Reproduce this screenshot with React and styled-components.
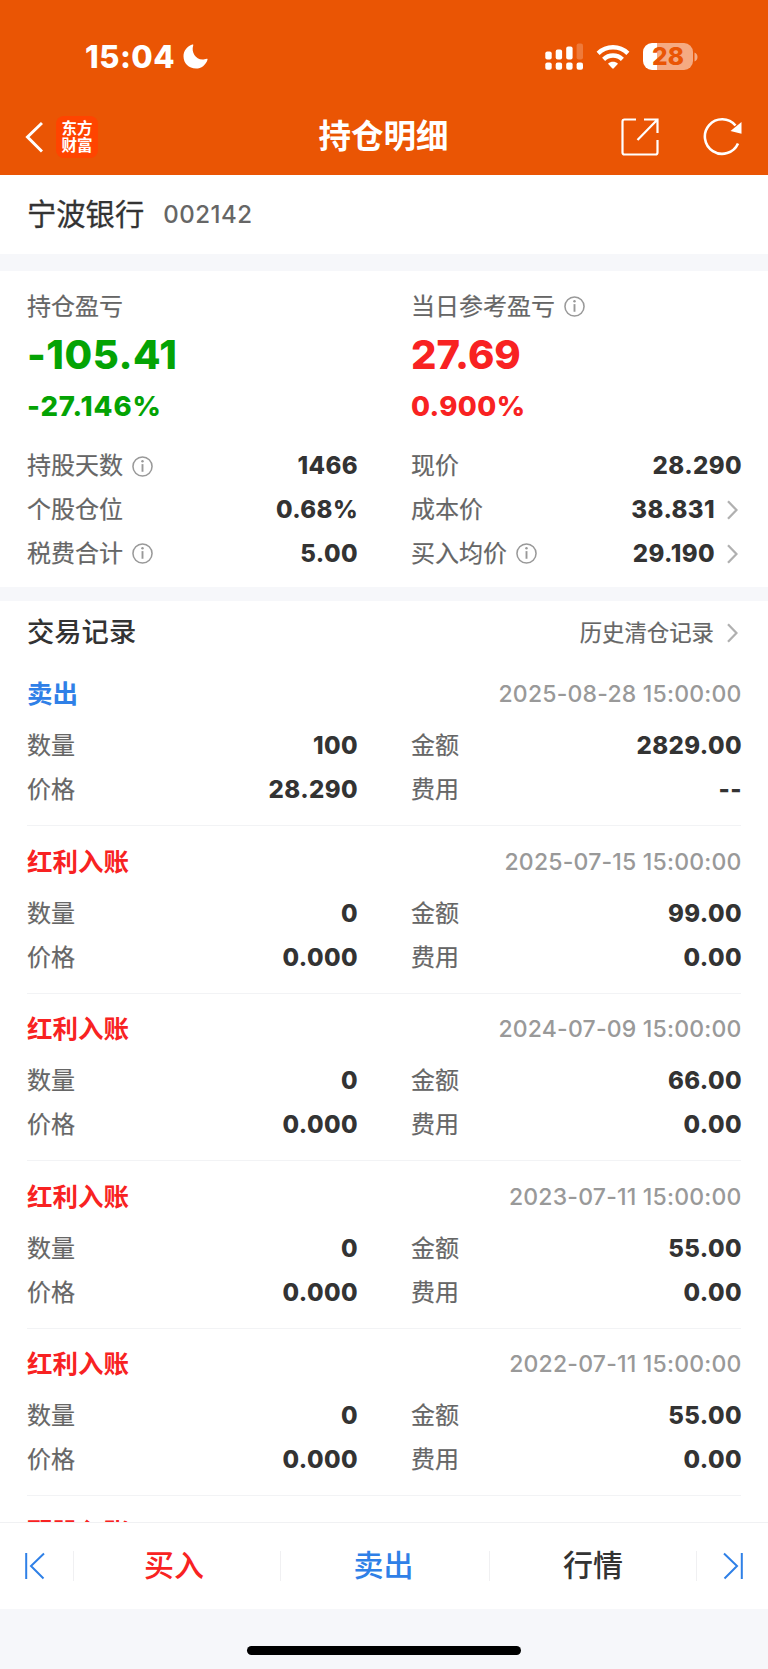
import React from 'react';
import styled, { createGlobalStyle } from 'styled-components';

const GlobalStyle = createGlobalStyle`
  * {
    box-sizing: border-box;
  }
  body {
    margin: 0;
    background: #fff;
    font-family: Inter, "Noto Sans CJK SC", sans-serif;
    color: #333;
  }
  svg {
    display: block;
    flex-shrink: 0;
  }
`

const colors = {
  red: '#f82222',
  green: '#04a304',
  blue: '#2f80e7',
}

const Page = styled.div`
  width: 768px;
  height: 1669px;
  overflow: hidden;
  display: flex;
  flex-direction: column;
  background: #fff;
`
const Header = styled.header`
  height: 175px;
  flex-shrink: 0;
  background: #ea5504;
  color: #fff;
`
const StatusBar = styled.div`
  height: 99px;
  padding: 14px 70px 0 85px;
  display: flex;
  align-items: center;
  justify-content: space-between;
`
const Clock = styled.div`
  display: flex;
  align-items: center;
  gap: 8px;
  font-size: 31px;
  line-height: 40px;
  font-weight: 800;
  letter-spacing: 0.5px;
`
const StatusIcons = styled.div`
  display: flex;
  align-items: center;
`
const Battery = styled.div`
  width: 50px;
  height: 27px;
  margin-left: 13px;
  border-radius: 9px;
  background: linear-gradient(to right, #fff 14px, #f5aa82 14px);
  color: #ea5504;
  font-size: 24.5px;
  font-weight: 800;
  line-height: 27px;
  text-align: center;
`
const NavBar = styled.nav`
  height: 75px;
  padding: 0 26px 0 25px;
  display: grid;
  grid-template-columns: 1fr auto 1fr;
  align-items: center;
`
const NavLeft = styled.div`
  display: flex;
  align-items: center;
  gap: 13px;
`
const NavRight = styled.div`
  display: flex;
  align-items: center;
  justify-content: flex-end;
  gap: 44px;
`
const Logo = styled.div`
  width: 42px;
  height: 42px;
  padding-top: 4px;
  border-radius: 8px;
  background: #ff4400;
  font-size: 15.5px;
  line-height: 17px;
  font-weight: 700;
  text-align: center;
`
const Title = styled.h1`
  margin: 0;
  font-size: 32.5px;
  line-height: 40px;
  font-weight: 700;
`
const StockBar = styled.div`
  height: 79px;
  flex-shrink: 0;
  padding: 0 27px;
  display: flex;
  align-items: center;
  gap: 19px;
`
const StockName = styled.span`
  font-size: 29.3px;
  line-height: 40px;
  -webkit-text-stroke: 0.3px currentColor;
`
const StockCode = styled.span`
  font-size: 24px;
  font-weight: 500;
  color: #666;
  letter-spacing: 0.5px;
`
const Gap = styled.div`
  height: ${props => props.$height}px;
  flex-shrink: 0;
  background: #f6f7fa;
`
const Summary = styled.section`
  height: 316px;
  flex-shrink: 0;
  padding: 17.5px 27px 0;
`
const Columns = styled.div`
  display: grid;
  grid-template-columns: 330px 330px;
  column-gap: 54px;
`
const Profit = styled.div`
  height: 156px;
  color: ${props => props.$color};
  font-weight: 800;
  font-feature-settings: "calt" 0;
`
const Amount = styled.div`
  margin-top: 7.5px;
  font-size: 40px;
  line-height: 46px;
  letter-spacing: ${props => props.$spacing || 0}px;
`
const Percent = styled.div`
  margin-top: 9.5px;
  font-size: 27.5px;
  line-height: 36px;
  letter-spacing: ${props => props.$spacing || 0}px;
`
const Row = styled.div`
  height: 43.7px;
  display: flex;
  align-items: center;
`
const Label = styled.span`
  display: flex;
  align-items: center;
  gap: 8.5px;
  font-size: 24px;
  line-height: 36px;
  font-weight: 400;
  color: #666;
  -webkit-text-stroke: 0.2px currentColor;
`
const Value = styled.span`
  margin-left: auto;
  margin-right: -1px;
  font-size: 24px;
  line-height: 36px;
  font-weight: 800;
  letter-spacing: 0.4px;
`
const ArrowBox = styled.span`
  width: 27px;
  padding-left: 12.5px;
`
const Records = styled.section`
  flex: 1;
  min-height: 0;
  overflow: hidden;
  padding: 0 27px;
`
const RecordsHead = styled.div`
  height: 64px;
  display: flex;
  align-items: center;
  justify-content: space-between;
`
const RecordsTitle = styled.h2`
  margin: 0;
  font-size: 27.3px;
  line-height: 40px;
  font-weight: 500;
`
const HistoryLink = styled.span`
  height: 34px;
  display: flex;
  align-items: center;
  font-size: 22.4px;
  line-height: 30px;
  padding-bottom: 1px;
  color: #666;
  -webkit-text-stroke: 0.2px currentColor;
`
const Record = styled.article`
  height: 167.5px;
  padding-top: 6px;
  border-bottom: 1px solid #f2f3f5;
  & + & {
    padding-top: 12.5px;
  }
  &:nth-of-type(1) {
    height: 161px;
  }
`
const RecordHead = styled.div`
  height: 46px;
  margin-bottom: 7.6px;
  display: flex;
  align-items: center;
  justify-content: space-between;
`
const RecordType = styled.span`
  font-size: 25.5px;
  line-height: 38px;
  font-weight: 700;
  color: ${props => props.$color};
`
const RecordDate = styled.time`
  margin-right: -0.5px;
  font-size: 23px;
  font-weight: 500;
  color: #999;
  letter-spacing: 0.2px;
`
const Footer = styled.footer`
  height: 87px;
  flex-shrink: 0;
  border-top: 1px solid #f0f1f3;
  display: grid;
  grid-template-columns: 73px 207px 209px 207px 72px;
  align-items: center;
`
const Tab = styled.div`
  height: 30px;
  padding-right: ${props => props.$shift || 0}px;
  display: flex;
  align-items: center;
  justify-content: center;
  border-left: 1px solid ${props => (props.$edge ? 'transparent' : '#f0f0f2')};
  font-size: 30px;
  line-height: 30px;
  font-weight: 500;
  color: ${props => props.$color};
  span {
    margin-bottom: 3px;
  }
`
const HomeArea = styled.div`
  height: 60px;
  flex-shrink: 0;
  padding-top: 37px;
  background: #f6f7fa;
`
const HomeBar = styled.div`
  width: 274px;
  height: 9px;
  margin: 0 auto;
  border-radius: 5px;
  background: #000;
`

const MoonIcon = () => (
  <svg width="25" height="25" viewBox="0 0 25 25" fill="#fff">
    <path d="M9.300.6C10 .3 10.500 .7 10.200 1.400 7.800 8.500 13.500 17 21.500 15.300c.9-.1 1.600-.3 2.300-.5.6-.1.9.3.7.9C22.800 21 18.400 24.500 13 24.500 5.800 24.500.5 19.200.5 12.200.5 7 4.200 2.200 9.300.6Z" />
  </svg>
)

const SignalIcon = () => (
  <svg width="39" height="28" viewBox="0 0 39 28" fill="#fff">
    <rect x="0.300" y="8.500" width="6.400" height="8" rx="2" />
    <rect x="10.700" y="6.500" width="6.400" height="10" rx="2" />
    <rect x="21.200" y="3.500" width="6.400" height="13" rx="2" />
    <rect x="31.600" y="0.500" width="6.400" height="16" rx="2" opacity=".22" />
    <rect x="0.300" y="19.600" width="6.400" height="7.200" rx="2" />
    <rect x="10.700" y="19.600" width="6.400" height="7.200" rx="2" />
    <rect x="21.200" y="19.600" width="6.400" height="7.200" rx="2" />
    <rect x="31.600" y="19.600" width="6.400" height="7.200" rx="2" />
  </svg>
)

const WifiSvg = styled.svg`
  margin-left: 12px;
`
const WifiIcon = () => (
  <WifiSvg width="34" height="26" viewBox="0 0 34 26" fill="none" stroke="#fff" strokeWidth="4.400">
    <path d="M2.100 9.300C10.500 1.200 23.500 1.200 31.900 9.300" />
    <path d="M7.600 15.300C13 10.200 21 10.200 26.400 15.300" />
    <path d="M12 19.700C15 17.100 19 17.100 22 19.700L17.800 24.300Q17 25.100 16.200 24.300Z" fill="#fff" stroke="none" />
  </WifiSvg>
)

const BatteryCap = () => (
  <svg width="5" height="10" viewBox="0 0 5 10" fill="#f5aa82">
    <path d="M1.500 .5C5.500 2 5.500 8 1.500 9.500Z" />
  </svg>
)

const BackIcon = () => (
  <svg width="18" height="32" viewBox="0 0 18 32" fill="none" stroke="#fff" strokeWidth="3">
    <path d="M17 2 2.500 16 17 30.500" />
  </svg>
)

const ShareIcon = () => (
  <svg width="38" height="38" viewBox="0 0 38 38" fill="none" stroke="#fff" strokeWidth="2.200">
    <path d="M15 1.500H3.500Q1.500 1.500 1.500 3.500V34.500Q1.500 36.500 3.500 36.500H34.500Q36.500 36.500 36.500 34.500V22" />
    <path d="M23 1.500H36.500V15M36.500 1.500 16.500 22" />
  </svg>
)

const RefreshIcon = () => (
  <svg width="39" height="39" viewBox="0 0 39 39" fill="none" stroke="#fff" strokeWidth="2.600">
    <path d="M35 26.500A17.300 17.300 0 1 1 32.500 8.500" />
    <path d="M27.500 14 38.500 5V16.800Z" fill="#fff" stroke="none" />
  </svg>
)

const InfoIcon = () => (
  <svg width="21" height="21" viewBox="0 0 22 22" fill="none" stroke="#999" strokeWidth="1.600">
    <circle cx="11" cy="11" r="10" />
    <path d="M11 8.500V16.500" strokeWidth="2" />
    <circle cx="11" cy="5.600" r="1.300" fill="#999" stroke="none" />
  </svg>
)

const ArrowIcon = () => (
  <svg width="11" height="20" viewBox="0 0 11 20" fill="none" stroke="#b0b0b0" strokeWidth="2.300">
    <path d="M1 1.200 9.500 10 1 18.800" />
  </svg>
)

const EdgeIcon = ({ flip }) => (
  <svg width="20" height="28" viewBox="0 0 20 28" fill="none" stroke={colors.blue} strokeWidth="2">
    <g transform={flip ? 'translate(20 0) scale(-1 1)' : undefined}>
      <path d="M1.200 1V27M19 1.500 6 14 18.500 26.500" />
    </g>
  </svg>
)

const Field = ({ label, value, info, arrow }) => (
  <Row>
    <Label>{label}{info && <InfoIcon />}</Label>
    <Value>{value}</Value>
    {arrow && <ArrowBox><ArrowIcon /></ArrowBox>}
  </Row>
)

const records = [
  { type: '卖出', date: '2025-08-28 15:00:00', count: '100', amount: '2829.00', price: '28.290', fee: '--', color: colors.blue },
  { type: '红利入账', date: '2025-07-15 15:00:00', count: '0', amount: '99.00', price: '0.000', fee: '0.00', color: colors.red },
  { type: '红利入账', date: '2024-07-09 15:00:00', count: '0', amount: '66.00', price: '0.000', fee: '0.00', color: colors.red },
  { type: '红利入账', date: '2023-07-11 15:00:00', count: '0', amount: '55.00', price: '0.000', fee: '0.00', color: colors.red },
  { type: '红利入账', date: '2022-07-11 15:00:00', count: '0', amount: '55.00', price: '0.000', fee: '0.00', color: colors.red },
]

const App = () => {
  return (
    <Page>
      <GlobalStyle />
      <Header>
        <StatusBar>
          <Clock>15:04<MoonIcon /></Clock>
          <StatusIcons>
            <SignalIcon />
            <WifiIcon />
            <Battery>28</Battery>
            <BatteryCap />
          </StatusIcons>
        </StatusBar>
        <NavBar>
          <NavLeft><BackIcon /><Logo>东方<br />财富</Logo></NavLeft>
          <Title>持仓明细</Title>
          <NavRight><ShareIcon /><RefreshIcon /></NavRight>
        </NavBar>
      </Header>
      <StockBar>
        <StockName>宁波银行</StockName>
        <StockCode>002142</StockCode>
      </StockBar>
      <Gap $height={17} />
      <Summary>
        <Columns>
          <Profit $color={colors.green}>
            <Label>持仓盈亏</Label>
            <Amount $spacing={0.5}>-105.41</Amount>
            <Percent $spacing={0.9}>-27.146%</Percent>
          </Profit>
          <Profit $color={colors.red}>
            <Label>当日参考盈亏<InfoIcon /></Label>
            <Amount>27.69</Amount>
            <Percent $spacing={0.4}>0.900%</Percent>
          </Profit>
          <Field label="持股天数" value="1466" info />
          <Field label="现价" value="28.290" />
          <Field label="个股仓位" value="0.68%" />
          <Field label="成本价" value="38.831" arrow />
          <Field label="税费合计" value="5.00" info />
          <Field label="买入均价" value="29.190" info arrow />
        </Columns>
      </Summary>
      <Gap $height={14} />
      <Records>
        <RecordsHead>
          <RecordsTitle>交易记录</RecordsTitle>
          <HistoryLink>历史清仓记录<ArrowBox><ArrowIcon /></ArrowBox></HistoryLink>
        </RecordsHead>
        {records.map(record => (
          <Record key={record.date}>
            <RecordHead>
              <RecordType $color={record.color}>{record.type}</RecordType>
              <RecordDate>{record.date}</RecordDate>
            </RecordHead>
            <Columns>
              <Field label="数量" value={record.count} />
              <Field label="金额" value={record.amount} />
              <Field label="价格" value={record.price} />
              <Field label="费用" value={record.fee} />
            </Columns>
          </Record>
        ))}
        <Record>
          <RecordHead>
            <RecordType $color={colors.red}>配股入账</RecordType>
          </RecordHead>
        </Record>
      </Records>
      <Footer>
        <Tab $edge $shift={5}><EdgeIcon /></Tab>
        <Tab $color={colors.red} $shift={6}><span>买入</span></Tab>
        <Tab $color={colors.blue} $shift={3}><span>卖出</span></Tab>
        <Tab $color="#333"><span>行情</span></Tab>
        <Tab><EdgeIcon flip /></Tab>
      </Footer>
      <HomeArea>
        <HomeBar />
      </HomeArea>
    </Page>
  )
}

export default App;
